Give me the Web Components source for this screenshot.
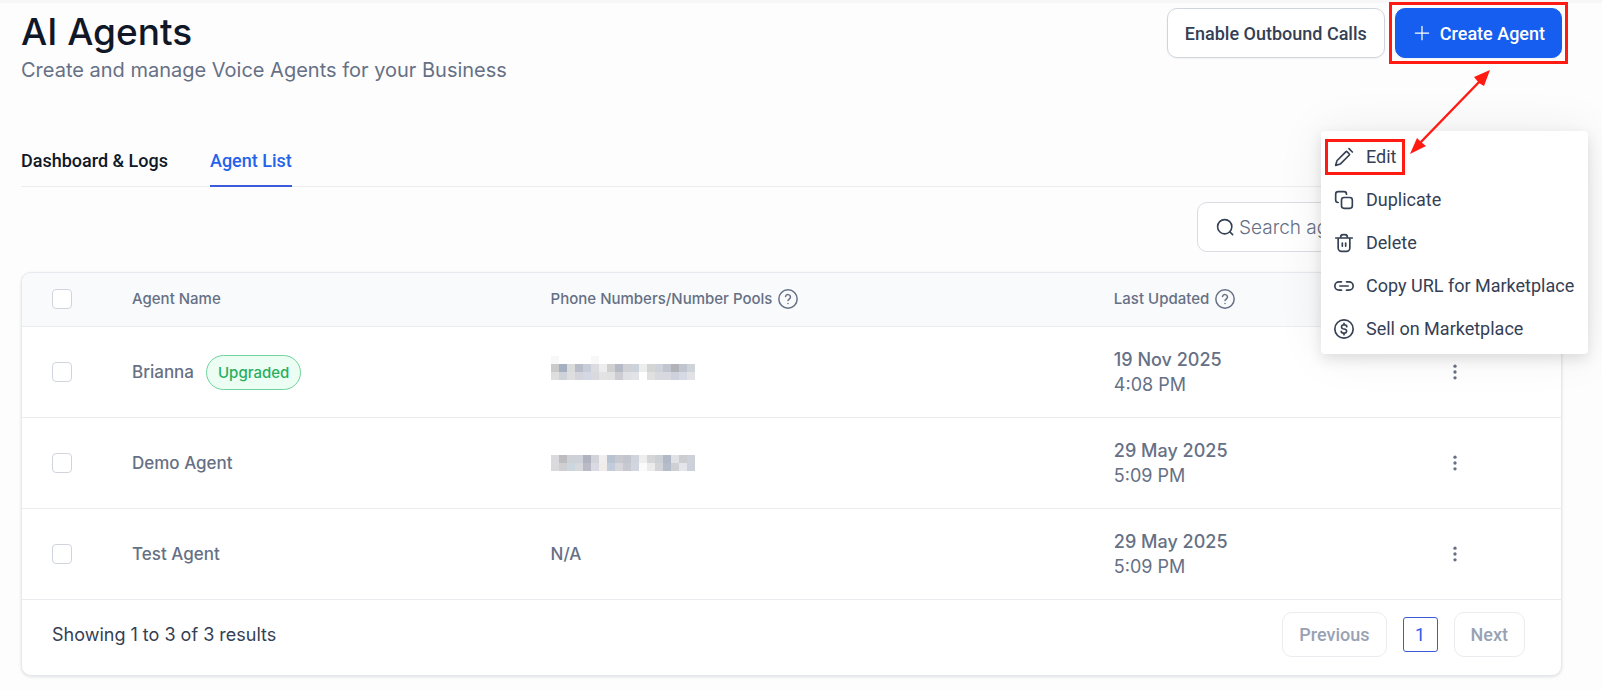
<!DOCTYPE html>
<html lang="en">
<head>
<meta charset="utf-8">
<title>AI Agents</title>
<style>
    body {
        margin: 0;
        background-color: #fdfdfd;
        font-family: Inter, "Liberation Sans", sans-serif;
        color: #667085;
    }
</style>
</head>
<body>
<agents-page></agents-page>

<script>
const ICONS = {
    plus: '<path d="M12 4v16M4 12h16"/>',
    search: '<circle cx="11" cy="11" r="9"/><path d="M21 21l-3.6-3.6"/>',
    help: '<circle cx="12" cy="12" r="11"/><path d="M9 9a3 3 0 0 1 5.9 1c0 2-2.9 2.6-2.9 3.9M12 17.4v.1"/>',
    dots: '<g fill="currentColor" stroke="none"><circle cx="12" cy="5" r="2"/><circle cx="12" cy="12" r="2"/><circle cx="12" cy="19" r="2"/></g>',
    edit: '<path d="M18 2l4 4M2 22l1.3-4.7c.1-.5.4-1 .8-1.4L14.4 5.6c.4-.4.8-.4 1.2 0l2.8 2.8c.4.4.4.8 0 1.2L8.1 19.9c-.4.4-.9.7-1.4.8z"/>',
    copy: '<rect x="9" y="9" width="13" height="13" rx="3"/><path d="M5 15a3 3 0 0 1-3-3V5a3 3 0 0 1 3-3h7a3 3 0 0 1 3 3"/>',
    trash: '<path d="M2 6h20M5 6v12a4 4 0 0 0 4 4h6a4 4 0 0 0 4-4V6M8 6V5a3 3 0 0 1 3-3h2a3 3 0 0 1 3 3v1M10 12v4M14 12v4"/>',
    link: '<path d="M15 7h3a5 5 0 0 1 0 10h-3M9 17H6A5 5 0 0 1 6 7h3M7 12h10"/>',
    dollar: '<circle cx="12" cy="12" r="11"/><path d="M15.3 9.2c0-1.300-1.100-2.200-2.400-2.200h-1.700a2.400 2.400 0 0 0-.5 4.700l2.700.6a2.400 2.400 0 0 1-.5 4.700h-1.700c-1.400 0-2.500-.9-2.500-2.200M12 5.200V7M12 17v1.800"/>'
};

// colour cells of the masked phone numbers, one string per row of 8px cells
const MASKS = {
    first: [
        'f8f8f8 - - - - f8f8f8 - - - - - - - - - - - -',
        'cacaca a4afc0 dadcdb b9bdc8 c8cdda dadce0 ededed d0d0d0 b6bac6 d0d1d6 cdd3da eceded d3d5d5 ced3db c1c5cf b2b2b9 c0c5cf cfd4da',
        'dedede cfd3d9 dedede d4d5dc d4d8e5 d9dadd e3e3e3 e1e1e3 cccdd3 dfe0e4 e1e3e6 - e0e0e0 d8d9df d7d8e0 cfd2dc d4d9e4 e0e2e6',
        '-'
    ],
    second: [
        'dadade bdbdbf ced2d8 ced2d8 b0b2bf d3d3db f0eeee b9c2d0 c8c9d0 c3c5ce cfd4dd eeeeef d4d6d8 cccfd4 b1b9c7 e1e2e5 cccdd1 cdd2da',
        'dadade cfcfd2 ccd6df d6d8dc b9bac6 d9dae3 f0ecea c2ccda d6d6db c7c8d0 d1d5df fafafa ebebec d2d4d7 b5bdcb cfd0d3 e4e5ea cbd0da'
    ]
};

const icon = (name, size) =>
    `<svg width="${size}" height="${size}" viewBox="0 0 24 24" fill="none" stroke="currentColor" stroke-width="2" stroke-linecap="round" stroke-linejoin="round" aria-hidden="true">${ICONS[name]}</svg>`;

class BaseElement extends HTMLElement {

    constructor() {
        super();

        if (!this.shadowRoot) {
            this.attachShadow({mode: 'open'});
        }
    }

    connectedCallback() {
        this.shadowRoot.innerHTML = this.render();
    }
}

class UiButton extends BaseElement {

    render(){
        const name = this.getAttribute("icon");
        return `
        <style>
        :host {
            display: block;
        }

        button {
            display: flex;
            align-items: center;
            gap: 8px;
            height: 50px;
            padding: 0 17px;
            border: 1px solid #d0d5dd;
            border-radius: 10px;
            background-color: #ffffff;
            color: #344054;
            font: 500 18px Roboto, "Liberation Sans", sans-serif;
            white-space: nowrap;
            box-shadow: 0 1px 2px #1018280d;
        }

        :host([primary]) button {
            background-color: #155eef;
            border-color: #155eef;
            color: #ffffff;
            padding: 0 16px;
        }

        :host([small]) button {
            height: 45px;
            padding: 0 16px;
            border-color: #eaecf0;
            color: #98a2b3;
            box-shadow: none;
        }

        :host([marked]) {
            outline: 3px solid #ff1a12;
            outline-offset: 3px;
        }

        svg {
            stroke-width: 1.5;
        }
        </style>
        <button type="button" ${this.hasAttribute("small") ? "disabled" : ""}>${name ? icon(name, 20) : ""}<slot></slot></button>
        `;
    }
}

class PageHeader extends BaseElement {

    render(){
        return `
        <style>
        :host {
            display: flex;
            justify-content: space-between;
            align-items: flex-start;
        }

        h1 {
            margin: 0;
            font-size: 37px;
            line-height: 48px;
            font-weight: 500;
            color: #101828;
        }

        p {
            margin: 0;
            font-size: 20px;
            line-height: 28px;
        }

        .actions {
            display: flex;
            gap: 10px;
        }
        </style>
        <div>
            <h1>${this.getAttribute("heading")}</h1>
            <p>${this.getAttribute("subtitle")}</p>
        </div>
        <div class="actions"><slot></slot></div>
        `;
    }
}

class TabList extends BaseElement {

    render(){
        return `
        <style>
        :host {
            display: block;
        }

        nav {
            display: flex;
            gap: 42px;
            border-bottom: 1px solid #eaecf0;
        }

        ::slotted(a) {
            margin-bottom: -1px;
            padding-bottom: 12px;
            border-bottom: 2px solid transparent;
            font: 500 18px/24px Roboto, "Liberation Sans", sans-serif;
            color: #101828;
            text-decoration: none;
        }

        ::slotted(a[aria-current]) {
            color: #2563eb;
            border-color: #3b5bdb;
        }
        </style>
        <nav><slot></slot></nav>
        `;
    }
}

class SearchBox extends BaseElement {

    render(){
        return `
        <style>
        :host {
            display: flex;
            justify-content: flex-end;
        }

        label {
            display: flex;
            align-items: center;
            gap: 4px;
            box-sizing: border-box;
            width: 365px;
            height: 50px;
            padding: 0 18px;
            border: 1px solid #d9dce3;
            border-radius: 10px;
            background-color: #ffffff;
            color: #344054;
        }

        input {
            flex: 1;
            min-width: 0;
            padding: 0;
            border: none;
            outline: none;
            background: none;
            font: 300 19px Inter, "Liberation Sans", sans-serif;
        }

        input::placeholder {
            color: #667085;
        }
        </style>
        <label>${icon("search", 19)}<input type="text" aria-label="Search agents" placeholder="Search agents"></label>
        `;
    }
}

class PixelMask extends BaseElement {

    render(){
        const rows = MASKS[this.getAttribute("pattern")];
        let cells = "";
        rows.forEach((row, y) => {
            row.split(" ").forEach((color, x) => {
                if (color !== "-") {
                    cells += `<rect x="${x * 8}" y="${y * 8}" width="8" height="8" fill="#${color}"/>`;
                }
            });
        });
        return `
        <style>
        :host {
            display: block;
        }

        svg {
            display: block;
        }
        </style>
        <svg width="144" height="${rows.length * 8}" shape-rendering="crispEdges" role="img" aria-label="Hidden number">${cells}</svg>
        `;
    }
}

class StatusBadge extends BaseElement {

    render(){
        return `
        <style>
        :host {
            display: inline-block;
            padding: 0 11px;
            border: 1px solid #6fd39b;
            border-radius: 18px;
            background-color: #ecfdf3;
            color: #27ae60;
            font-size: 15px;
            line-height: 33px;
            font-weight: 500;
        }
        </style>
        <slot></slot>
        `;
    }
}

class AgentsTable extends BaseElement {

    get agents(){
        return [
            {name: "Brianna", badge: "Upgraded", mask: "first", date: "19 Nov 2025", time: "4:08 PM"},
            {name: "Demo Agent", mask: "second", date: "29 May 2025", time: "5:09 PM"},
            {name: "Test Agent", phone: "N/A", date: "29 May 2025", time: "5:09 PM"}
        ];
    }

    row(agent){
        return `
            <tr>
                <td><input type="checkbox" aria-label="Select ${agent.name}"></td>
                <td><div class="name">${agent.name}${agent.badge ? `<status-badge>${agent.badge}</status-badge>` : ""}</div></td>
                <td>${agent.mask ? `<pixel-mask pattern="${agent.mask}"></pixel-mask>` : agent.phone}</td>
                <td class="date">${agent.date}<div class="time">${agent.time}</div></td>
                <td><button type="button" aria-label="Actions for ${agent.name}">${icon("dots", 20)}</button></td>
            </tr>`;
    }

    render(){
        return `
        <style>
        :host {
            display: block;
            border: 1px solid #e6e9ee;
            border-radius: 10px;
            background-color: #ffffff;
            box-shadow: 0 1px 3px #1018281f;
            overflow: hidden;
        }

        table {
            width: 100%;
            table-layout: fixed;
            border-collapse: separate;
            border-spacing: 0;
        }

        th, td {
            box-sizing: border-box;
            padding: 0;
            border-bottom: 1px solid #eaecf0;
            text-align: left;
            vertical-align: middle;
        }

        th {
            height: 54px;
            padding-bottom: 2px;
            background-color: #f9fafb;
            font-size: 15px;
            font-weight: 500;
        }

        td {
            height: 91px;
            font-size: 17px;
            line-height: 25px;
            font-weight: 500;
        }

        th:first-child, td:first-child {
            width: 110px;
            padding-left: 30px;
        }

        .name-col {
            width: 27.2%;
        }

        .phone-col {
            width: 36.6%;
        }

        .date-col {
            width: 21.5%;
        }

        .name, .label {
            display: flex;
            align-items: center;
        }

        .name {
            gap: 12px;
        }

        .label {
            gap: 6px;
        }

        .date {
            font-size: 18px;
        }

        .time {
            font-weight: 400;
        }

        .label svg {
            stroke-width: 1.8;
        }

        input {
            display: block;
            appearance: none;
            width: 20px;
            height: 20px;
            margin: 0;
            border: 1px solid #d0d5dd;
            border-radius: 4px;
            background-color: #ffffff;
        }

        button {
            display: flex;
            padding: 0;
            border: none;
            background: none;
            color: #667085;
        }
        </style>
        <table>
            <thead>
                <tr>
                    <th><input type="checkbox" aria-label="Select all agents"></th>
                    <th class="name-col">Agent Name</th>
                    <th class="phone-col"><span class="label">Phone Numbers/Number Pools ${icon("help", 20)}</span></th>
                    <th class="date-col"><span class="label">Last Updated ${icon("help", 20)}</span></th>
                    <th></th>
                </tr>
            </thead>
            <tbody>${this.agents.map(agent => this.row(agent)).join("")}</tbody>
        </table>
        <slot></slot>
        `;
    }
}

class TablePager extends BaseElement {

    render(){
        return `
        <style>
        :host {
            display: flex;
            justify-content: space-between;
            align-items: center;
            height: 45px;
            padding: 12px 36px 18px 30px;
            color: #344054;
            font-size: 18px;
        }

        nav {
            display: flex;
            align-items: center;
            gap: 16px;
        }

        .page {
            width: 35px;
            height: 35px;
            padding: 0;
            border: 1px solid #3b5bdb;
            border-radius: 3px;
            background-color: #ffffff;
            color: #2f5bea;
            font: 400 18px Roboto, "Liberation Sans", sans-serif;
        }
        </style>
        <span>Showing 1 to 3 of 3 results</span>
        <nav aria-label="Pages">
            <ui-button small>Previous</ui-button>
            <button class="page" type="button">1</button>
            <ui-button small>Next</ui-button>
        </nav>
        `;
    }
}

class MenuItem extends BaseElement {

    render(){
        return `
        <style>
        :host {
            display: block;
        }

        button {
            display: flex;
            align-items: center;
            width: 100%;
            height: 43px;
            padding: 0 12px;
            border: none;
            background: none;
            color: #344054;
            font: 400 18px/18px Roboto, "Liberation Sans", sans-serif;
            white-space: nowrap;
        }

        span {
            display: flex;
            align-items: center;
            gap: 12px;
            padding: 0 1px;
        }

        :host([marked]) span {
            outline: 3px solid #ff1a12;
            outline-offset: 5px;
        }
        </style>
        <button type="button" role="menuitem"><span>${icon(this.getAttribute("icon"), 20)}<slot></slot></span></button>
        `;
    }
}

class ActionMenu extends BaseElement {

    render(){
        return `
        <style>
        :host {
            display: block;
            box-sizing: border-box;
            width: 267px;
            padding: 4px 0;
            border-radius: 4px;
            background-color: #ffffff;
            box-shadow: 0 5px 14px #0000001c, 0 0 48px #00000012;
        }
        </style>
        <div role="menu"><slot></slot></div>
        `;
    }
}

// double-headed pointer between the menu entry and the header button
class NoteArrow extends BaseElement {

    render(){
        return `
        <style>
        :host {
            display: block;
            pointer-events: none;
        }

        svg {
            display: block;
        }
        </style>
        <svg width="82" height="86" viewBox="0 0 82 86" fill="#ff1a12" aria-hidden="true">
            <path d="M10 75L72 11" stroke="#ff1a12" stroke-width="2.5"/>
            <path d="M81 1L75 17L70 14L65 8zM1 85L8 69L12 73L17 77z"/>
        </svg>
        `;
    }
}

class AgentsPage extends BaseElement {

    render(){
        return `
        <style>
        :host {
            display: block;
            position: relative;
            padding: 5px 40px 14px 21px;
            border-top: 3px solid #f7f7f7;
        }

        tab-list {
            margin-top: 65px;
        }

        search-box {
            margin-top: 15px;
        }

        agents-table {
            margin-top: 20px;
        }

        action-menu {
            position: absolute;
            top: 128px;
            right: 14px;
        }

        note-arrow {
            position: absolute;
            top: 66px;
            right: 111px;
        }
        </style>
        <page-header heading="AI Agents" subtitle="Create and manage Voice Agents for your Business">
            <ui-button>Enable Outbound Calls</ui-button>
            <ui-button primary marked icon="plus">Create Agent</ui-button>
        </page-header>
        <tab-list>
            <a href="#logs">Dashboard &amp; Logs</a>
            <a href="#agents" aria-current="page">Agent List</a>
        </tab-list>
        <search-box></search-box>
        <agents-table>
            <table-pager></table-pager>
        </agents-table>
        <action-menu>
            <menu-item icon="edit" marked>Edit</menu-item>
            <menu-item icon="copy">Duplicate</menu-item>
            <menu-item icon="trash">Delete</menu-item>
            <menu-item icon="link">Copy URL for Marketplace</menu-item>
            <menu-item icon="dollar">Sell on Marketplace</menu-item>
        </action-menu>
        <note-arrow></note-arrow>
        `;
    }
}

window.customElements.define('ui-button', UiButton);
window.customElements.define('page-header', PageHeader);
window.customElements.define('tab-list', TabList);
window.customElements.define('search-box', SearchBox);
window.customElements.define('pixel-mask', PixelMask);
window.customElements.define('status-badge', StatusBadge);
window.customElements.define('agents-table', AgentsTable);
window.customElements.define('table-pager', TablePager);
window.customElements.define('menu-item', MenuItem);
window.customElements.define('action-menu', ActionMenu);
window.customElements.define('note-arrow', NoteArrow);
window.customElements.define('agents-page', AgentsPage);
</script>
</body>
</html>
